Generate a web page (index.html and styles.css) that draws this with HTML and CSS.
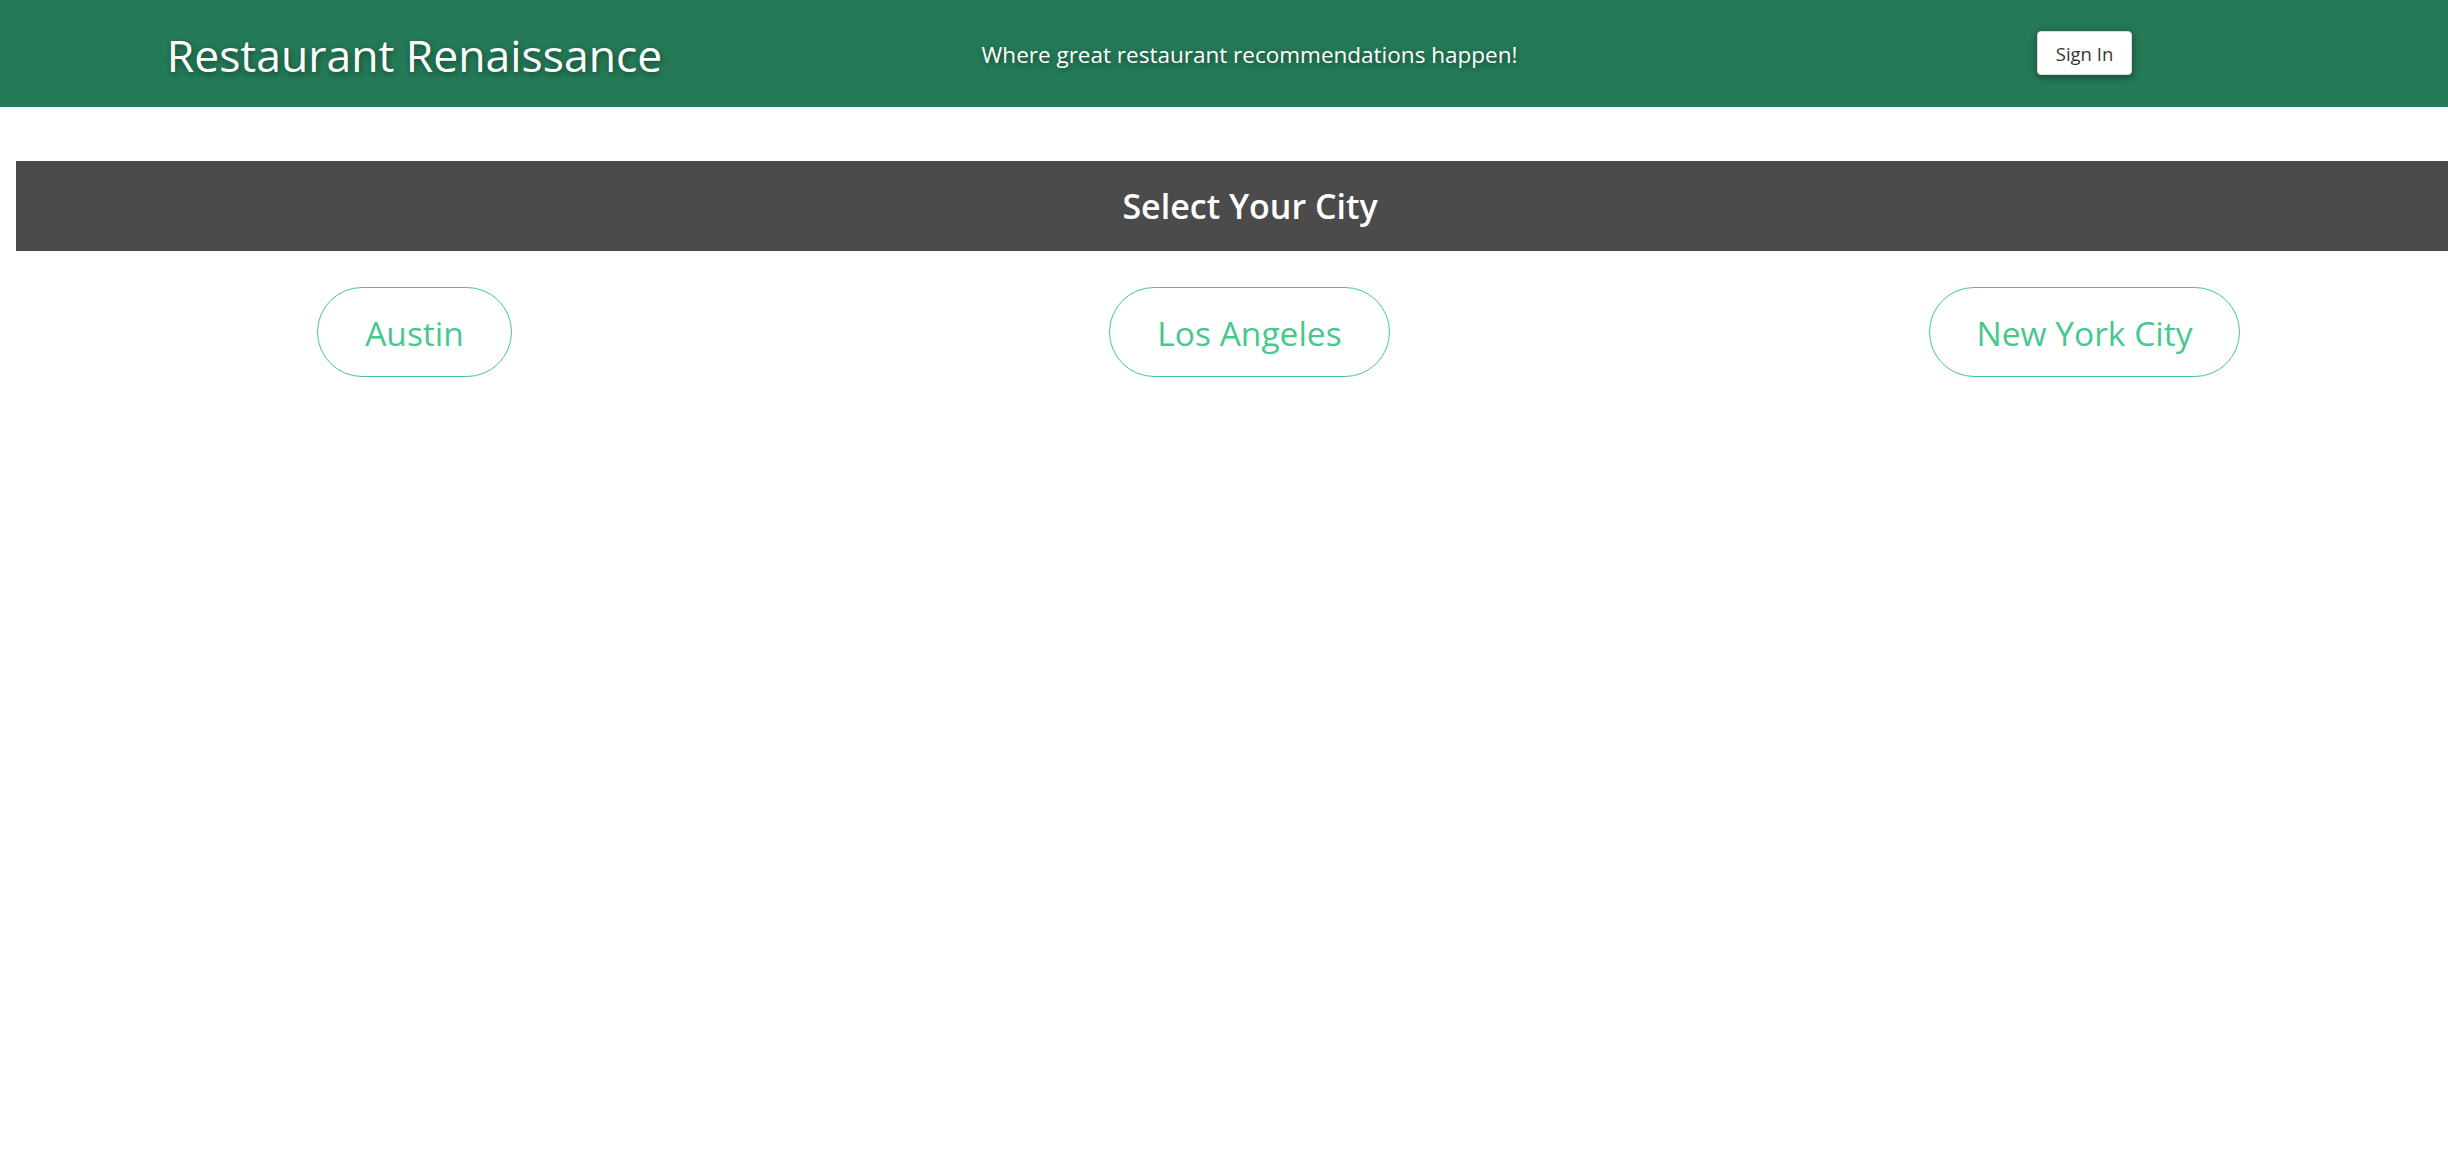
FILE: index.html
```html
<!DOCTYPE html>
<html lang="en">
<head>
<meta charset="utf-8">
<title>Restaurant Renaissance</title>
<link rel="stylesheet" href="styles.css">
</head>
<body>
<header class="topbar">
  <div class="cols">
    <h1 class="brand">Restaurant Renaissance</h1>
    <p class="tagline">Where great restaurant recommendations happen!</p>
    <button class="signin" type="button">Sign In</button>
  </div>
</header>
<main>
  <section class="city-banner">
    <h2 class="city-title">Select Your City</h2>
  </section>
  <div class="cols cities">
    <a class="city-pill" href="#">Austin</a>
    <a class="city-pill" href="#">Los Angeles</a>
    <a class="city-pill" href="#">New York City</a>
  </div>
</main>
</body>
</html>
```
FILE: styles.css
```css
html, body {
  margin: 0;
  padding: 0;
  background: #ffffff;
  overflow: hidden;
}

body {
  font-family: "Open Sans", "Noto Sans", "Liberation Sans", sans-serif;
  color: #363636;
}

.cols {
  display: grid;
  grid-template-columns: repeat(3, 1fr);
  align-items: center;
  justify-items: center;
  width: calc(100% + 57px);
  margin-left: -3px;
  flex-shrink: 0;
}

.topbar {
  background: #247a57;
  height: 107px;
  display: flex;
  align-items: center;
}

.brand {
  margin: 0;
  font-size: 44.5px;
  font-weight: 400;
  color: #ffffff;
  text-shadow: 1px 2px 6px rgba(0, 0, 0, 0.45);
  line-height: 1.2;
  padding-top: 2px;
}

.tagline {
  margin: 0;
  font-size: 22.5px;
  color: #ffffff;
  text-shadow: 1px 2px 6px rgba(0, 0, 0, 0.45);
  padding-top: 2px;
}

.signin {
  font-family: inherit;
  font-size: 18.5px;
  color: #363636;
  background: #ffffff;
  border: 1px solid #dbdbdb;
  border-radius: 4px;
  height: 44px;
  padding: 0 18px;
  box-shadow: 0 2px 8px rgba(0, 0, 0, 0.45);
}

.city-banner {
  margin-top: 54px;
  margin-left: 16px;
  width: calc(100% + 20px);
  height: 90px;
  background: #4b4b4b;
  display: flex;
  align-items: center;
  justify-content: center;
}

.city-title {
  margin: 0;
  font-size: 34px;
  font-weight: 600;
  color: #ffffff;
}

.cities {
  margin-top: 36px;
}

.city-pill {
  display: inline-flex;
  align-items: center;
  justify-content: center;
  box-sizing: border-box;
  height: 90px;
  padding: 2px 47px 0;
  border: 1px solid #48c78e;
  border-radius: 9999px;
  color: #48c78e;
  font-size: 33.5px;
  text-decoration: none;
}
```
